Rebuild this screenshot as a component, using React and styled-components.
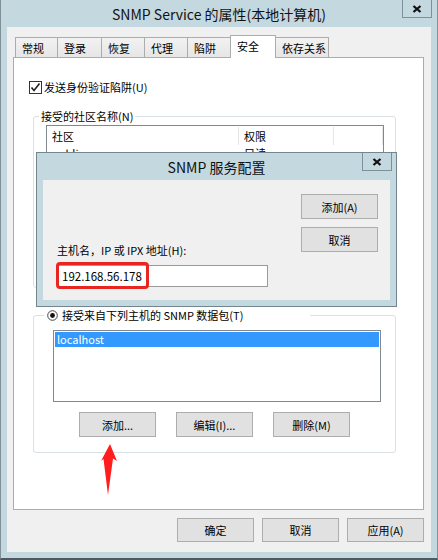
import React from "react";
import styled, { createGlobalStyle } from "styled-components";

const FONT = `"Noto Sans CJK SC", "Noto Sans", sans-serif`;
const FRAME = "#c4d8e0";

const GlobalStyle = createGlobalStyle`
  html, body {
    margin: 0;
    padding: 0;
    background: #ffffff;
  }
  body {
    font-family: ${FONT};
    font-size: 11px;
    color: #000000;
  }
`;

const tabs = [
  { title: "常规", w: 43 },
  { title: "登录", w: 45 },
  { title: "恢复", w: 44 },
  { title: "代理", w: 44 },
  { title: "陷阱", w: 44 },
  { title: "安全", w: 46, active: true },
  { title: "依存关系", w: 54 }
];

const CloseGlyph = () => (
  <svg width="10" height="8" viewBox="0 0 10 8">
    <path d="M1.5 1 L8.5 7 M8.5 1 L1.5 7" stroke="#111" strokeWidth="2.3" />
  </svg>
);

const CheckMark = () => (
  <svg width="11" height="11" viewBox="0 0 11 11">
    <polyline
      points="1.5,5.5 4,8.5 9.5,1.5"
      fill="none"
      stroke="#222"
      strokeWidth="1.6"
    />
  </svg>
);

const RadioDot = () => (
  <svg width="11" height="11" viewBox="0 0 11 11">
    <circle cx="5.5" cy="5.5" r="4.8" fill="#fff" stroke="#444" strokeWidth="1" />
    <circle cx="5.5" cy="5.5" r="2.4" fill="#111" />
  </svg>
);

const RedArrow = () => (
  <svg width="20" height="54" viewBox="0 0 20 54">
    <polygon
      points="11,1 18,18 14,15.5 9,52 4.5,16 2,18"
      fill="#ff1d1d"
    />
  </svg>
);

const App = () => {
  return (
    <React.Fragment>
      <GlobalStyle />
      <Window>
        <TitleBar>
          <Title>SNMP Service 的属性(本地计算机)</Title>
          <CloseButton>
            <CloseGlyph />
          </CloseButton>
        </TitleBar>

        <Client>
          <TabStrip>
            {tabs.map((t, i) => (
              <Tab key={t.title} w={t.w} active={t.active} first={i === 0}>
                {t.title}
              </Tab>
            ))}
          </TabStrip>

          <Panel>
            <CheckRow>
              <CheckBox>
                <CheckMark />
              </CheckBox>
              <span>发送身份验证陷阱(U)</span>
            </CheckRow>

            <GroupBox top={15}>
              <Legend>接受的社区名称(N)</Legend>
              <GroupBody pad="2px 11px 10px 12px">
                <CommunityList>
                  <ListHeader>
                    <HeaderCell>社区</HeaderCell>
                    <HeaderCell>权限</HeaderCell>
                    <HeaderCell />
                  </ListHeader>
                  <ListRow>
                    <RowCell>public</RowCell>
                    <RowCell>只读</RowCell>
                  </ListRow>
                </CommunityList>
              </GroupBody>
            </GroupBox>

            <GroupBox top={20}>
              <RadioLegend>
                <RadioDot />
                <span>接受来自下列主机的 SNMP 数据包(T)</span>
              </RadioLegend>
              <GroupBody pad="8px 13px 15px 19px">
                <HostList>
                  <HostItem selected>localhost</HostItem>
                </HostList>
                <HostButtons>
                  <Button>添加...</Button>
                  <Button>编辑(I)...</Button>
                  <Button>删除(M)</Button>
                </HostButtons>
              </GroupBody>
            </GroupBox>
          </Panel>

          <FooterButtons>
            <Button h={24}>确定</Button>
            <Button h={24}>取消</Button>
            <Button h={24}>应用(A)</Button>
          </FooterButtons>
        </Client>

        <Dialog>
          <DialogTitleBar>
            <DialogTitle>SNMP 服务配置</DialogTitle>
            <CloseButton small>
              <CloseGlyph />
            </CloseButton>
          </DialogTitleBar>
          <DialogClient>
            <DialogFields>
              <FieldLabel>主机名，IP 或 IPX 地址(H):</FieldLabel>
              <InputWrap>
                <TextInput defaultValue="192.168.56.178" />
                <Highlight />
              </InputWrap>
            </DialogFields>
            <DialogButtons>
              <Button>添加(A)</Button>
              <Button>取消</Button>
            </DialogButtons>
          </DialogClient>
        </Dialog>

        <ArrowMark>
          <RedArrow />
        </ArrowMark>
      </Window>
    </React.Fragment>
  );
};

const Window = styled.div`
  position: relative;
  width: 438px;
  height: 560px;
  box-sizing: border-box;
  background: ${FRAME};
  border-left: 1px solid #7f9098;
  border-right: 1px solid #7f9098;
  border-bottom: 2px solid #4e5a60;
  display: flex;
  flex-direction: column;
  overflow: hidden;
`;

const TitleBar = styled.div`
  flex: none;
  height: 27px;
  display: grid;
  grid-template-columns: 1fr auto 1fr;
`;

const Title = styled.div`
  grid-column: 2;
  align-self: center;
  font-size: 14px;
  line-height: 18px;
  color: #111;
  white-space: nowrap;
`;

const CloseButton = styled.div`
  grid-column: 3;
  justify-self: end;
  align-self: start;
  width: 30px;
  height: 18px;
  box-sizing: border-box;
  margin-right: ${p => (p.small ? 4 : 5)}px;
  border: 1px solid #7d8f98;
  border-top: none;
  background: ${FRAME};
  display: flex;
  align-items: center;
  justify-content: center;
`;

const Client = styled.div`
  flex: 1;
  margin: 0 6px 6px;
  background: #f0f0f0;
  padding: 8px 7px 10px 6px;
  display: flex;
  flex-direction: column;
`;

const TabStrip = styled.div`
  position: relative;
  z-index: 1;
  height: 23px;
  margin: 0 0 -1px 2px;
  display: flex;
  align-items: flex-end;
`;

const Tab = styled.div`
  position: relative;
  z-index: ${p => (p.active ? 2 : 1)};
  box-sizing: border-box;
  width: ${p => p.w}px;
  height: ${p => (p.active ? 23 : 21)}px;
  margin-left: ${p => (p.first ? 0 : -1)}px;
  padding-left: 6px;
  border: 1px solid #acacac;
  border-bottom: ${p => (p.active ? "none" : "1px solid #acacac")};
  background: ${p =>
    p.active ? "#ffffff" : "linear-gradient(#f2f2f2, #e6e6e6)"};
  display: flex;
  align-items: center;
  line-height: 14px;
  padding-bottom: ${p => (p.active ? 2 : 0)}px;
`;

const Panel = styled.div`
  box-sizing: border-box;
  height: 453px;
  background: #ffffff;
  border: 1px solid #acacac;
  padding: 22px 27px 0 19px;
  display: flex;
  flex-direction: column;
`;

const CheckRow = styled.div`
  height: 14px;
  line-height: 14px;
  margin-left: -4px;
  display: flex;
  align-items: center;
  gap: 2px;
`;

const CheckBox = styled.span`
  box-sizing: border-box;
  width: 13px;
  height: 13px;
  border: 1px solid #333;
  background: #fff;
  display: flex;
  align-items: center;
  justify-content: center;
`;

const GroupBox = styled.fieldset`
  margin: ${p => p.top}px 0 0;
  padding: 0;
  min-width: 0;
  border: 1px solid #d9e1e6;
  border-radius: 3px;
`;

const Legend = styled.legend`
  margin-left: 5px;
  padding: 0 2px;
  line-height: 14px;
`;

const RadioLegend = styled.legend`
  box-sizing: border-box;
  width: 266px;
  margin-left: 10px;
  padding: 0 0 0 3px;
  line-height: 14px;
  display: flex;
  align-items: center;
  gap: 4px;
`;

const GroupBody = styled.div`
  padding: ${p => p.pad};
`;

const CommunityList = styled.div`
  height: 150px;
  border: 1px solid #828790;
  background: #fff;
`;

const ListHeader = styled.div`
  margin-top: 1px;
  display: grid;
  grid-template-columns: 192px 95px 1fr;
  height: 18px;
`;

const HeaderCell = styled.div`
  border-right: 1px solid #e5e5e5;
  padding-left: 5px;
  line-height: 18px;
`;

const ListRow = styled.div`
  display: grid;
  grid-template-columns: 192px 95px;
  height: 16px;
`;

const RowCell = styled.div`
  padding-left: 5px;
  line-height: 17px;
`;

const HostList = styled.div`
  box-sizing: border-box;
  width: 328px;
  height: 72px;
  border: 1px solid #828790;
  padding: 1px;
  background: #fff;
`;

const HostItem = styled.div`
  height: 15px;
  line-height: 15px;
  padding-left: 2px;
  background: ${p => (p.selected ? "#3399ff" : "transparent")};
  color: ${p => (p.selected ? "#ffffff" : "#000")};
`;

const HostButtons = styled.div`
  margin: 10px 0 0 26px;
  display: flex;
  gap: 20px;
`;

const Button = styled.div`
  box-sizing: border-box;
  width: 77px;
  height: ${p => p.h || 25}px;
  background: #e1e1e1;
  border: 1px solid #adadad;
  display: flex;
  align-items: center;
  justify-content: center;
  line-height: 14px;
  white-space: nowrap;
`;

const FooterButtons = styled.div`
  margin-top: 8px;
  display: flex;
  justify-content: flex-end;
  gap: 8px;
`;

const Dialog = styled.div`
  position: absolute;
  z-index: 5;
  left: 35px;
  top: 152px;
  width: 361px;
  height: 155px;
  box-sizing: border-box;
  border: 1px solid #73858e;
  background: ${FRAME};
  display: flex;
  flex-direction: column;
`;

const DialogTitleBar = styled.div`
  flex: none;
  height: 27px;
  display: grid;
  grid-template-columns: 1fr auto 1fr;
`;

const DialogTitle = styled.div`
  grid-column: 2;
  align-self: center;
  font-size: 14px;
  line-height: 18px;
  color: #111;
  white-space: nowrap;
`;

const DialogClient = styled.div`
  flex: 1;
  margin: 0 6px 6px;
  background: #f0f0f0;
  padding: 14px 12px 13px 14px;
  display: grid;
  grid-template-columns: 1fr 77px;
`;

const DialogFields = styled.div`
  display: flex;
  flex-direction: column;
  justify-content: flex-end;
`;

const FieldLabel = styled.div`
  line-height: 14px;
  margin-bottom: 8px;
`;

const InputWrap = styled.div`
  position: relative;
  width: 211px;
  height: 22px;
`;

const TextInput = styled.input`
  box-sizing: border-box;
  width: 100%;
  height: 100%;
  margin: 0;
  border: 1px solid #9a9a9a;
  background: #fff;
  padding: 0 4px;
  font-family: ${FONT};
  font-size: 11.5px;
  color: #000;
  outline: none;
`;

const Highlight = styled.div`
  position: absolute;
  left: -1px;
  top: -3px;
  width: 93px;
  height: 27px;
  box-sizing: border-box;
  border: 3px solid #e8261f;
  border-radius: 4px;
  pointer-events: none;
`;

const DialogButtons = styled.div`
  display: flex;
  flex-direction: column;
  gap: 8px;
`;

const ArrowMark = styled.div`
  position: absolute;
  left: 98px;
  top: 443px;
  width: 20px;
  height: 54px;
  line-height: 0;
`;

export default App;
